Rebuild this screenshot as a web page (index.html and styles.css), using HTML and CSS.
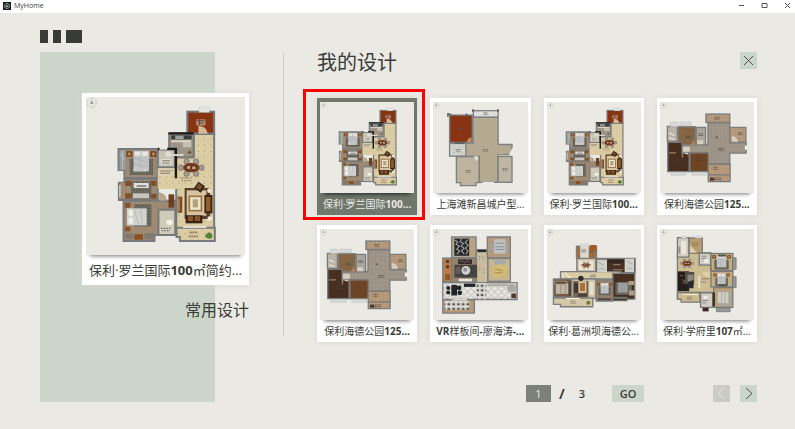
FILE: index.html
```
<!DOCTYPE html>
<html lang="zh-CN">
<head>
<meta charset="utf-8">
<meta name="viewport" content="width=device-width, initial-scale=1">
<title>MyHome</title>
<link rel="stylesheet" href="styles.css">
</head>
<body>
<svg class="defs" aria-hidden="true">
  <defs>
    <pattern id="tile" width="19" height="19" patternUnits="userSpaceOnUse"><rect width="19" height="19" fill="#dccda4"/><path d="M0 0H19M0 0V19" stroke="#d2c398"/><path d="M8 8h3v3h-3z" fill="#a08f69"/></pattern>
    <pattern id="stone" width="13" height="13" patternUnits="userSpaceOnUse"><rect width="13" height="13" fill="#9f9588"/><path d="M0 0H13M0 0V13" stroke="#8c8377"/></pattern>
    <pattern id="wood" width="12" height="8" patternUnits="userSpaceOnUse"><rect width="12" height="8" fill="#4a3122"/><path d="M0 0V8M6 0V8" stroke="#32221a"/></pattern>
    <pattern id="red" width="14" height="8" patternUnits="userSpaceOnUse"><rect width="14" height="8" fill="#8b3512"/><path d="M0 0H14M0 4H14" stroke="#7c2d10"/></pattern>
    <pattern id="plank" width="12" height="9" patternUnits="userSpaceOnUse"><rect width="12" height="9" fill="#b89b7d"/><path d="M0 0H12M4 0V9" stroke="#a68767"/></pattern>
    <pattern id="parquet" width="14" height="14" patternUnits="userSpaceOnUse"><rect width="14" height="14" fill="#a18c75"/><path d="M0 0L14 14M14 0L0 14" stroke="#8e7862"/></pattern>
    <pattern id="diamond" width="20" height="20" patternUnits="userSpaceOnUse"><rect width="20" height="20" fill="#e6e5e1"/><path d="M0 10L10 0L20 10L10 20Z" fill="none" stroke="#a3a29d" stroke-width="2"/></pattern>
    <pattern id="rug" width="9" height="9" patternUnits="userSpaceOnUse"><rect width="9" height="9" fill="#5b5951"/><path d="M1 2h3v3h-3zM5 6h3v2h-3z" fill="#a19c8f"/></pattern>
    <pattern id="checks" width="14" height="14" patternUnits="userSpaceOnUse"><rect width="14" height="14" fill="#e0ded7"/><path d="M1 2h8v7h-8z" fill="#55534e"/></pattern>

    <symbol id="compass" viewBox="0 0 36 36"><circle cx="18" cy="18" r="15" fill="none" stroke="#babab5" stroke-width="2" stroke-dasharray="12 4"/><path d="M18 8l5 13h-10z" fill="#8c8c88"/><path d="M18 2V34M2 18H34" stroke="#c9c9c4"/></symbol>
    <symbol id="bed" viewBox="0 0 90 80"><rect x="10" y="28" width="70" height="48" fill="url(#rug)"/><path d="M0 5h18v16H0zM72 5h18v16H72z" fill="#6e3b1b"/><circle cx="9" cy="13" r="5" fill="#b78a52"/><circle cx="81" cy="13" r="5" fill="#b78a52"/><rect x="22" y="3" width="46" height="62" fill="#c1c3c5"/><path d="M25 6h17v12H25zM47 6h17v12H47z" fill="#e7e6e2"/><path d="M24 25l40 12M24 44l40 8M40 23v40" stroke="#aaaeb1" stroke-width="2"/></symbol>
    <symbol id="dining" viewBox="0 0 80 56"><g fill="#a39c94" stroke="#71665a" stroke-width="2"><circle cx="26" cy="10" r="8"/><circle cx="54" cy="10" r="8"/><circle cx="10" cy="28" r="8"/><circle cx="70" cy="28" r="8"/><circle cx="26" cy="46" r="8"/><circle cx="54" cy="46" r="8"/></g><ellipse cx="40" cy="28" rx="24" ry="14" fill="#713a20"/><path d="M28 24h8v7h-8zM43 25h9v7h-9z" fill="#d2bda3"/></symbol>

    <symbol id="plan-a" viewBox="36 36 474 474" preserveAspectRatio="none">
      <use href="#compass" x="36" y="37" width="34" height="34"/>
      <g stroke="#777a7c" stroke-width="6">
        <rect x="338" y="80" width="80" height="66" fill="url(#red)"/>
        <path d="M357 147H418V430H305V217H357Z" fill="url(#tile)"/>
        <rect x="284" y="146" width="73" height="71" fill="url(#stone)"/>
        <path d="M133 192H250V279H150V258H133Z" fill="url(#parquet)"/>
        <rect x="250" y="192" width="51" height="55" fill="#c9c3b6"/>
        <path d="M134 290H150V281H250V345H134Z" fill="url(#parquet)"/>
        <path d="M148 347H303V450H240V468H148Z" fill="url(#parquet)"/>
        <rect x="252" y="374" width="50" height="76" fill="#d2cab9"/>
        <path d="M306 428H420V468H316V456H306Z" fill="url(#tile)"/>
      </g>
      <rect x="250" y="250" width="60" height="62" fill="url(#tile)"/>
      <path d="M250 192H304V280M282 145H357" fill="none" stroke="#171817" stroke-width="7"/>
      <rect x="373" y="66" width="31" height="16" fill="#dfe3e2" stroke="#b5bbba"/>
      <path d="M255 186h23v8h-23zM130 258h17v32h-17z" fill="#eae9e4"/>
      <rect x="365" y="103" width="27" height="18" fill="#b8947d"/><path d="M367 107h23M370 114h17M374 103v16" stroke="#604334" stroke-width="3"/>
      <path d="M371 146V123Q394 121 399 146Z" fill="#d5b697"/>
      <path d="M290 151H351V163H290Z" fill="#393c3b"/><path d="M302 152h25v10h-25z" fill="#9ca19f"/>
      <path d="M290 169H349M290 210H327" stroke="#d8d4c8" stroke-width="6"/><path d="M324 171h26v16h-26z" fill="#c4beb0"/><circle cx="345" cy="202" r="5" fill="#6c553b"/>
      <rect x="136" y="195" width="17" height="60" fill="#969e9f"/><path d="M145 197V253M137 205l14 20" stroke="#c7cccb" stroke-width="2"/>
      <use href="#bed" x="156" y="194" width="90" height="80"/>
      <path d="M178 246h37v13h-37z" fill="#d6d6d4"/><path d="M181 249h31M183 255h27" stroke="#777"/>
      <path d="M259 222h31v16h-31z" fill="#e4e0d6"/><path d="M263 227h24M263 234h22" stroke="#797469" stroke-width="3"/>
      <circle cx="281" cy="208" r="9" fill="#dedbd2"/><path d="M255 253h37v20h-37z" fill="#ddd1b6"/><path d="M257 258h33M257 265h29" stroke="#8b7c60" stroke-width="3"/>
      <g fill="#805028"><path d="M153 287h18v16h-18zM227 287h19v16h-19zM153 325h18v16h-18zM227 326h19v15h-19z"/></g>
      <rect x="170" y="289" width="61" height="51" fill="url(#rug)"/><rect x="178" y="294" width="45" height="15" fill="#e2dfda"/><rect x="176" y="325" width="48" height="14" fill="#c8c5bd"/><path d="M187 303h29" stroke="#6b6963" stroke-width="4"/>
      <path d="M137 300V337" stroke="#dadbd6" stroke-width="4"/>
      <rect x="180" y="358" width="51" height="66" fill="url(#rug)"/><rect x="158" y="370" width="59" height="51" fill="#d2d2cf"/><path d="M163 375h13v17h-13zM163 398h13v18h-13z" fill="#f0efe9"/><path d="M180 374l12 43M199 374l4 41" stroke="#adafad" stroke-width="2"/>
      <path d="M152 353h16v15h-16zM152 425h16v14h-16zM180 448h26v16h-26z" fill="#875225"/><path d="M153 445h24v18h-24zM210 445h27v18h-27z" fill="#81796b"/>
      <path d="M282 328h17v40h-17z" fill="#6b3f23"/><path d="M254 322Q275 325 277 347H254Z" fill="#b9a489"/>
      <ellipse cx="285" cy="412" rx="10" ry="8" fill="#f4f1e9"/><path d="M256 427h35v14h-35z" fill="#dad7cd"/><path d="M259 430h29M261 437h26" stroke="#69645a" stroke-width="4" stroke-dasharray="5 3"/>
      <use href="#dining" x="309" y="220" width="82" height="56"/>
      <path d="M318 279h34M320 287h32" stroke="#a39370" stroke-width="4" stroke-dasharray="6 2"/>
      <rect x="330" y="309" width="76" height="93" fill="#55402b"/><rect x="336" y="316" width="59" height="76" fill="#d7c49f"/><rect x="344" y="334" width="36" height="43" fill="#eee5cf" stroke="#9a744b" stroke-width="5"/><path d="M354 343h16v24h-16z" fill="#b4a17e"/>
      <path d="M371 290l20 14-13 19-20-14z" fill="#2e241b"/><path d="M371 295l13 9-8 12-12-8z" fill="#7a4b24"/>
      <path d="M389 330h24v55h-24z" fill="#3c2414"/><path d="M394 336h13v43h-13z" fill="#91602d"/>
      <path d="M333 391h50v24h-50z" fill="#392317"/><path d="M340 394h15v14h-15zM360 394h16v14h-16z" fill="#8d5428"/>
      <path d="M309 335h14v48h-14z" fill="#7d4a23"/><path d="M313 340v38" stroke="#d5b17d" stroke-width="3"/><circle cx="404" cy="317" r="7" fill="#f1e5cd"/><circle cx="405" cy="401" r="7" fill="#f2ead7"/>
      <path d="M325 426h70" stroke="#eceae0" stroke-width="5"/><path d="M345 442h23M342 454h28" stroke="#8c7c5c" stroke-width="5" stroke-dasharray="6 2"/><path d="M395 447l7-5 7 3 5 8-6 8-11-1-7-6z" fill="#528235"/>
    </symbol>

    <symbol id="plan-b" viewBox="28 36 278 272" preserveAspectRatio="none">
      <use href="#compass" x="27" y="36" width="21" height="21"/>
      <g stroke="#7c8081" stroke-width="4">
        <path d="M146 82H220V163H261V193H220V276H164V199H125V159H146Z" fill="#b5aa91"/>
        <rect x="77" y="75" width="67" height="82" fill="url(#red)"/><rect x="147" y="62" width="73" height="19" fill="#dedfdd"/>
        <rect x="77" y="160" width="48" height="38" fill="#d4d3cd"/><path d="M97 199H164V277H155V286H109V277H97Z" fill="#bdb49f"/><rect x="220" y="199" width="41" height="77" fill="#bfb5a3"/>
      </g>
      <rect x="127" y="162" width="35" height="34" fill="#b5aa91"/><rect x="217" y="166" width="20" height="26" fill="#b5aa91"/>
      <path d="M72 69v12M72 72h10M127 70v12M146 57v9M220 57v9M92 159h28M174 276h34" stroke="#50565a" stroke-width="4"/>
      <path d="M174 276h34M255 193l8-18v18z" fill="#fff" stroke="#e9e9e5" stroke-width="4"/><path d="M128 156q1-14 14-14v14z" fill="#c48861"/><path d="M149 198h12v13q-12-1-12-13z" fill="#e1ddd2"/>
      <g stroke="#595a58" stroke-width="2" stroke-dasharray="5 1"><path d="M104 114h15M101 119h21M177 68h12M176 73h15M175 178h15M174 183h17M125 241h14M124 246h16M233 235h14M233 240h16M94 178h16M96 183h13"/></g>
      <path d="M83 171h37M83 187h37M88 163v32M114 163v32" stroke="#b8b9b5"/>
    </symbol>

    <symbol id="plan-d" viewBox="30 36 281 272" preserveAspectRatio="none">
      <use href="#compass" x="30" y="36" width="21" height="21"/>
      <g stroke="#7b7d7d" stroke-width="4">
        <path d="M173 98H238V158H287V189H238V222H174V188H97V163H173Z" fill="url(#stone)"/>
        <rect x="167" y="72" width="71" height="25" fill="url(#plank)"/><rect x="52" y="109" width="30" height="45" fill="#bab4a8"/>
        <rect x="84" y="110" width="52" height="54" fill="#846544"/><rect x="138" y="112" width="28" height="52" fill="#aaa69d"/>
        <path d="M53 156H96V188H117V244H53Z" fill="url(#wood)"/><rect x="119" y="188" width="55" height="56" fill="#6e4524"/>
        <rect x="238" y="112" width="48" height="44" fill="url(#plank)"/><path d="M174 222H239V274H174Z" fill="url(#plank)"/>
      </g>
      <path d="M176 254h61" stroke="#777a78" stroke-width="4"/><path d="M61 96h22v14h-22zM89 96h34v11h-34zM63 246h44v9h-44zM125 246h44v9h-44z" fill="#d6d9d7" stroke="#aaadad"/>
      <path d="M57 188H78M97 188v14" stroke="#9d8063" stroke-width="4"/><path d="M98 170h20q3 12 0 15h-20zM141 150h18v12h-18zM244 155v-18q15 2 19 18zM97 188l17 6v-6z" fill="#d6cfc1"/>
      <path d="M121 166l9-18 6 16z" fill="#aa835c"/><path d="M283 166h8v13h-8z" fill="#efeee9"/>
      <g stroke="#3f4140" stroke-width="2" stroke-dasharray="4 1"><path d="M193 82h14M192 87h16M205 175h15M203 180h19M107 138h14M106 143h16M144 131h14M144 136h16M263 128h14M262 133h14M77 208h17M75 214h21M136 205h15M135 211h18M188 231h15M188 237h15M194 263h18M193 268h20"/></g><circle cx="199" cy="141" r="3" fill="#555"/>
      <path d="M57 128l16 8M57 143l16 5" stroke="#eee" stroke-width="3"/><rect x="179" y="262" width="13" height="9" fill="#4c382c"/>
    </symbol>

    <symbol id="plan-f" viewBox="28 30 278 275" preserveAspectRatio="none">
      <use href="#compass" x="27" y="30" width="21" height="21"/>
      <g stroke="#7a7e80" stroke-width="4">
        <rect x="156" y="94" width="34" height="103" fill="#c9bd9e"/><rect x="83" y="54" width="72" height="63" fill="#b5a78f"/><rect x="188" y="54" width="68" height="63" fill="url(#plank)"/>
        <rect x="57" y="118" width="27" height="71" fill="#bb7d48"/><rect x="85" y="118" width="71" height="72" fill="#97846a"/><rect x="190" y="119" width="66" height="69" fill="#c7b58f"/>
        <path d="M57 192H276V243H57Z" fill="url(#diamond)"/><path d="M57 244H150V284H57Z" fill="url(#plank)"/>
      </g>
      <rect x="91" y="59" width="44" height="52" fill="#28292b"/><path d="M93 64l8 5-5 7 10 6-8 9 9 6-9 9M112 60l-4 9 10 4-7 9 9 6-8 8 8 9M130 62l-7 9 9 8-8 9 7 9-6 9" fill="none" stroke="#a8aaac" stroke-width="3"/><rect x="136" y="63" width="16" height="50" fill="#bba27e"/>
      <rect x="195" y="70" width="56" height="31" fill="#a49e94"/><rect x="208" y="61" width="34" height="43" fill="#c0c2c1"/><path d="M211 73h28M211 84h28M211 92h28" stroke="#8d918f" stroke-width="3"/>
      <rect x="91" y="138" width="67" height="39" fill="#454442"/><rect x="102" y="122" width="41" height="14" fill="#322b2a"/><path d="M106 130l8-5 6 7 11-7 7 7" stroke="#aa7770" stroke-width="2" fill="none"/><circle cx="125" cy="155" r="13" fill="#d2d2ce"/><circle cx="123" cy="153" r="6" fill="#92948f"/><rect x="94" y="145" width="15" height="20" fill="#665b52"/><rect x="104" y="180" width="39" height="8" fill="#e7e5df"/>
      <circle cx="71" cy="128" r="5" fill="#493b30"/><circle cx="71" cy="144" r="5" fill="#493b30"/><rect x="64" y="166" width="14" height="18" fill="#8e5528"/>
      <rect x="159" y="91" width="26" height="9" fill="#252a2b"/><path d="M165 112v12M175 112v12M166 145v13M177 151v12" stroke="#857961" stroke-width="3" stroke-dasharray="3 5"/>
      <rect x="208" y="123" width="34" height="14" fill="#a4aaad"/><path d="M201 145l24-10 23 12-6 26-38 2z" fill="#d3bb75"/><path d="M211 150l23 6M209 162h24" stroke="#a9904e" stroke-width="3"/>
      <g fill="#232627"><circle cx="73" cy="208" r="6"/><circle cx="105" cy="208" r="7"/><circle cx="73" cy="222" r="6"/><circle cx="107" cy="223" r="7"/><rect x="82" y="199" width="17" height="32"/><rect x="119" y="195" width="34" height="10"/></g>
      <rect x="157" y="194" width="28" height="49" fill="url(#checks)"/><circle cx="260" cy="209" r="13" fill="#aaa9a4"/><rect x="259" y="225" width="14" height="14" fill="#4c3d30"/><rect x="189" y="195" width="60" height="8" fill="#b2afa6"/>
      <rect x="62" y="247" width="73" height="27" fill="url(#checks)"/><path d="M85 244h44" stroke="#ece9e0" stroke-width="4"/><path d="M160 55h25v36h-25z" fill="#eae9e4"/>
    </symbol>

    <symbol id="plan-g" viewBox="28 30 278 275" preserveAspectRatio="none">
      <use href="#compass" x="27" y="30" width="21" height="21"/>
      <g stroke="#7a7c7d" stroke-width="4">
        <rect x="115" y="82" width="59" height="36" fill="#a46c3f"/><rect x="116" y="119" width="56" height="39" fill="#d5c9aa"/>
        <rect x="173" y="119" width="115" height="43" fill="url(#wood)"/><path d="M68 159H245V181H68Z" fill="#d9cca9"/>
        <rect x="47" y="181" width="54" height="55" fill="#755c48"/><rect x="101" y="181" width="72" height="58" fill="#cfc3a7"/><path d="M173 184H222V248H173Z" fill="#97816b"/><path d="M222 164H287V242H222Z" fill="url(#wood)"/><path d="M47 239H163V265H68V258H47Z" fill="#d5c7a5"/>
      </g>
      <rect x="126" y="73" width="25" height="44" fill="#dadad5"/><path d="M129 93h14M129 99h14M161 79v36M153 98h20" stroke="#5f5e57" stroke-width="2"/><path d="M156 78h17v17h-17z" fill="#a45a25"/>
      <rect x="121" y="124" width="45" height="31" fill="#eee6d1" stroke="#b9aa87"/><use href="#dining" x="127" y="123" width="32" height="32"/>
      <path d="M176 122h29v38h-29zM257 120h28v40h-28z" fill="#d1d1cc"/><path d="M180 130l15 10M181 150h18M265 128l15 8M264 149h17" stroke="#a8a9a7" stroke-width="3"/><rect x="210" y="124" width="43" height="8" fill="#292a28"/><path d="M223 138h22M221 153h30" stroke="#9f8974" stroke-width="3"/>
      <rect x="54" y="194" width="39" height="32" fill="#c0b7ac"/><path d="M50 188h35v8H50zM69 198v27M82 198v27" fill="#594434" stroke="#a18f7b" stroke-width="3"/><path d="M91 189h7v43h-7z" fill="#514234"/>
      <rect x="105" y="187" width="45" height="49" fill="#736654"/><path d="M108 193h12v30h-12z" fill="#3e3430"/><path d="M121 188h23v35h-23z" fill="#dfcaa6"/><path d="M125 193h15v25h-15z" fill="#a96f3d"/><circle cx="128" cy="179" r="8" fill="#292a29"/><path d="M119 225h27v10h-27z" fill="#48423c"/><path d="M153 190h12v40h-12z" fill="#e9e1ce"/>
      <use href="#bed" x="175" y="187" width="46" height="50"/><rect x="230" y="191" width="48" height="38" fill="url(#rug)"/><path d="M237 192h29v30h-29z" fill="#999d9d"/><path d="M268 187h17v12h-17zM270 216h16v15h-16z" fill="#b49b82"/>
      <path d="M177 238h41v8h-41zM223 235h42v13h-42z" fill="#6e6e68"/><path d="M178 242h39M224 243h38" stroke="#3b332c" stroke-width="3"/><path d="M84 240h41" stroke="#f2efe4" stroke-width="3"/><path d="M97 248h15M97 254h16M157 169h15M154 174h18" stroke="#72695b" stroke-width="2"/><circle cx="150" cy="253" r="6" fill="#68793b"/>
      <path d="M81 163l17 16M75 164v15" stroke="#eee7d4" stroke-width="4"/>
    </symbol>

    <symbol id="plan-h" viewBox="30 30 281 275" preserveAspectRatio="none">
      <use href="#compass" x="30" y="30" width="21" height="21"/>
      <g stroke="#797b7b" stroke-width="4">
        <path d="M82 102H181V156H207V208H191V222H150V242H82Z" fill="#cdbd93"/>
        <rect x="82" y="56" width="34" height="59" fill="#d0ccc0"/><rect x="117" y="57" width="39" height="46" fill="#b79c70"/><rect x="147" y="103" width="34" height="36" fill="#d1cdc3"/>
        <rect x="182" y="104" width="65" height="52" fill="#c4ae81"/><rect x="182" y="158" width="65" height="47" fill="#c4ae81"/><path d="M190 207H247V267H190Z" fill="#bda176"/><rect x="151" y="223" width="39" height="44" fill="#d1cdc4"/><path d="M82 222H149V251H93V242H82Z" fill="#cdbb90"/>
      </g>
      <path d="M135 49h19v9h-19zM93 50h16v7H93z" fill="#d8dad5"/><path d="M247 117h10v35h-10zM247 174h10v33h-10zM198 268h41v12h-41z" fill="#969998" stroke="#686c6c" stroke-width="2"/><path d="M157 268h18v11h-18z" fill="#3c2525"/>
      <rect x="93" y="66" width="15" height="40" fill="#ece7d8"/><path d="M88 83v20" stroke="#8c8b7d" stroke-width="5"/><path d="M119 102V78l21 23z" fill="#ddccb0"/><path d="M126 73h20M127 80h17" stroke="#8c6449" stroke-width="2"/>
      <use href="#dining" x="89" y="119" width="43" height="30"/>
      <path d="M83 158h34v60H83z" fill="#251d1b"/><path d="M104 160h28v37h-28z" fill="#4e4d46"/><path d="M112 168h18v26h-18z" fill="#8b897c"/><path d="M96 183l9 6-8 6M90 171h8" stroke="#b88758" fill="none" stroke-width="2"/><path d="M112 190l18-6v25h-18z" fill="#2b292b"/><path d="M144 173h6v35h-6z" fill="#e6e1d4"/>
      <use href="#bed" x="184" y="106" width="59" height="49"/><use href="#bed" x="184" y="162" width="59" height="43"/><rect x="205" y="218" width="38" height="44" fill="#a4a69f"/><rect x="202" y="221" width="32" height="33" fill="#d2cec3"/><path d="M214 221v34M224 221v34" stroke="#9a9e9d" stroke-width="2"/><path d="M186 222h8v42h-8z" fill="#3c332b"/><path d="M203 107h24v6h-24zM206 197h22v6h-22z" fill="#4b574b"/>
      <circle cx="168" cy="126" r="7" fill="#eee"/><path d="M154 112h15M154 119h14M156 246h18M156 253h12" stroke="#898b89" stroke-width="3"/><ellipse cx="166" cy="236" rx="7" ry="5" fill="#f2eee6"/><path d="M154 159h25v18q-17-1-25-18z" fill="#decda6"/><path d="M154 180h24" stroke="#9e8d64" stroke-width="4"/><path d="M96 228h47" stroke="#f1e9d5" stroke-width="3"/><path d="M111 236h14M110 242h17M151 190h16" stroke="#736d5b" stroke-width="2"/>
    </symbol>
  </defs>
</svg>

<header class="titlebar">
  <svg class="app-icon" viewBox="0 0 16 16" aria-hidden="true"><rect width="16" height="16" fill="#171b1b"/><circle cx="8" cy="8" r="5" fill="none" stroke="#8e9492" stroke-width="2"/><path d="M5 9l3-4 3 4-3 2z" fill="#a5aaa8"/></svg>
  <span class="app-name">MyHome</span>
  <div class="window-controls">
    <button type="button" aria-label="最小化"><svg viewBox="0 0 7 7"><path d="M1 3.5H6"/></svg></button>
    <button type="button" aria-label="最大化"><svg viewBox="0 0 7 7"><path d="M1 1.5H6V5.5H1Z"/></svg></button>
    <button type="button" aria-label="关闭窗口"><svg viewBox="0 0 7 7"><path d="M1 1L6 6M6 1L1 6"/></svg></button>
  </div>
</header>

<div class="app">
  <div class="logo" aria-hidden="true"><i></i><i></i><i></i></div>
  <div class="columns">
    <aside class="common">
      <a class="card card-large" href="#">
        <svg class="thumb" aria-hidden="true"><use href="#plan-a"/></svg>
        <span class="name">保利·罗兰国际<b>100</b>㎡简约...</span>
      </a>
      <h2>常用设计</h2>
    </aside>
    <main class="designs">
      <div class="designs-body">
        <div class="heading">
          <h1>我的设计</h1>
          <button class="square" type="button" aria-label="关闭"><svg viewBox="0 0 17 17"><path d="M4 4L13 13M13 4L4 13"/></svg></button>
        </div>
        <div class="cards">
          <a class="card selected" href="#"><svg class="thumb" aria-hidden="true"><use href="#plan-a"/></svg><span class="name">保利·罗兰国际<b>100...</b></span></a>
          <a class="card" href="#"><svg class="thumb" aria-hidden="true"><use href="#plan-b"/></svg><span class="name">上海滩新昌城户型...</span></a>
          <a class="card" href="#"><svg class="thumb" aria-hidden="true"><use href="#plan-a"/></svg><span class="name">保利·罗兰国际<b>100...</b></span></a>
          <a class="card" href="#"><svg class="thumb" aria-hidden="true"><use href="#plan-d"/></svg><span class="name">保利海德公园<b>125...</b></span></a>
          <a class="card" href="#"><svg class="thumb" aria-hidden="true"><use href="#plan-d"/></svg><span class="name">保利海德公园<b>125...</b></span></a>
          <a class="card" href="#"><svg class="thumb" aria-hidden="true"><use href="#plan-f"/></svg><span class="name"><b>VR</b>样板间<b>-</b>廖海涛<b>-...</b></span></a>
          <a class="card" href="#"><svg class="thumb" aria-hidden="true"><use href="#plan-g"/></svg><span class="name">保利·葛洲坝海德公...</span></a>
          <a class="card" href="#"><svg class="thumb" aria-hidden="true"><use href="#plan-h"/></svg><span class="name">保利·学府里<b>107</b>㎡...</span></a>
        </div>
      </div>
      <nav class="pager" aria-label="分页">
        <input type="text" value="1" aria-label="页码">
        <span class="slash">/</span>
        <span class="total">3</span>
        <button class="go" type="button">GO</button>
        <button class="square prev" type="button" aria-label="上一页" disabled><svg viewBox="0 0 17 17"><path d="M11 3L5 8.5L11 14"/></svg></button>
        <button class="square" type="button" aria-label="下一页"><svg viewBox="0 0 17 17"><path d="M6 3L12 8.5L6 14"/></svg></button>
      </nav>
    </main>
  </div>
</div>
</body>
</html>
```
FILE: styles.css
```
* {
  box-sizing: border-box;
}

body {
  margin: 0;
  min-height: 100vh;
  background: #eae9e4;
  color: #3a3c38;
  font-family: "Open Sans", "Noto Sans CJK SC", sans-serif;
}

button,
input {
  margin: 0;
  padding: 0;
  border: 0;
  border-radius: 0;
  font: inherit;
  color: inherit;
}

h1,
h2 {
  margin: 0;
  font-weight: 400;
}

.defs {
  position: absolute;
  width: 0;
  height: 0;
}

.titlebar {
  display: flex;
  align-items: center;
  height: 13px;
  padding: 0 4px 2px 3px;
  background: #fff;
}

.app-icon {
  width: 8px;
  height: 8px;
  margin-right: 3px;
}

.app-name {
  font-size: 7px;
  line-height: 10px;
}

.window-controls {
  display: flex;
  gap: 16px;
  margin-left: auto;
}

.window-controls button {
  display: flex;
  width: 7px;
  height: 7px;
  background: none;
}

.window-controls svg {
  width: 7px;
  height: 7px;
  fill: none;
  stroke: #555;
}

.app {
  padding: 17px 38px 26px 40px;
}

.logo {
  display: flex;
  gap: 5px;
  height: 13px;
  margin-bottom: 9px;
}

.logo i {
  width: 8px;
  background: #393b36;
}

.logo i:last-child {
  width: 16px;
}

.columns {
  display: flex;
  gap: 34px;
}

.common {
  flex: none;
  width: 209px;
  padding: 41px 0 79px 42px;
  background: linear-gradient(#cbd5ca, #cbd5ca) no-repeat 0 0 / 175px 100%;
}

.common h2 {
  margin-top: 13px;
  font-size: 16px;
  line-height: 24px;
  text-align: right;
}

.designs {
  display: flex;
  flex: 1;
  flex-direction: column;
  min-width: 0;
}

.designs-body {
  padding-left: 33px;
  border-left: 1px solid #cbd1c8;
}

.heading {
  display: flex;
  align-items: flex-start;
  justify-content: space-between;
  height: 46px;
}

.heading h1 {
  font-size: 20px;
  line-height: 22px;
}

.cards {
  display: grid;
  grid-template-columns: repeat(4, 1fr);
  gap: 10px 13px;
  margin-bottom: -6px;
}

.card {
  position: relative;
  display: flex;
  flex-direction: column;
  padding: 4px 3px 0;
  background: #fff;
  box-shadow: 0 0 6px #d9dad2;
  color: inherit;
  text-decoration: none;
}

.thumb {
  display: block;
  width: 100%;
  height: 91px;
  background: #eae9e4;
  box-shadow: 0 5px 4px -4px #777;
}

.name {
  font-size: 10px;
  line-height: 22px;
  text-align: center;
  white-space: nowrap;
}

.card-large {
  padding: 4px 4px 0;
}

.card-large .thumb {
  height: 158px;
}

.card-large .name {
  font-size: 13px;
  line-height: 30px;
}

.selected {
  background: #70786c;
  color: #eae9e4;
}

.selected .thumb {
  box-shadow: 0 5px 4px -4px #222;
}

.selected::after {
  content: "";
  position: absolute;
  inset: -9px -8px -5px -14px;
  border: 3px solid #f00;
}

.pager {
  display: flex;
  align-items: center;
  justify-content: flex-end;
  margin-top: 49px;
  font-size: 11px;
  font-weight: 600;
  line-height: 17px;
}

.pager input {
  width: 25px;
  height: 17px;
  background: #7c8079;
  color: #eae9e4;
  font-weight: 400;
  text-align: center;
}

.slash {
  width: 22px;
  font-size: 14px;
  font-weight: 700;
  text-align: center;
}

.total {
  width: 18px;
  text-align: center;
}

.go {
  width: 32px;
  height: 17px;
  margin: 0 69px 0 21px;
  background: #cbd5ca;
}

.square {
  display: flex;
  width: 17px;
  height: 17px;
  background: #cbd5ca;
}

.square svg {
  width: 17px;
  height: 17px;
  fill: none;
  stroke: #50544d;
}

.prev {
  margin-right: 10px;
  background: #cacbc6;
}

.prev svg {
  stroke: #e6e6e1;
}
```
